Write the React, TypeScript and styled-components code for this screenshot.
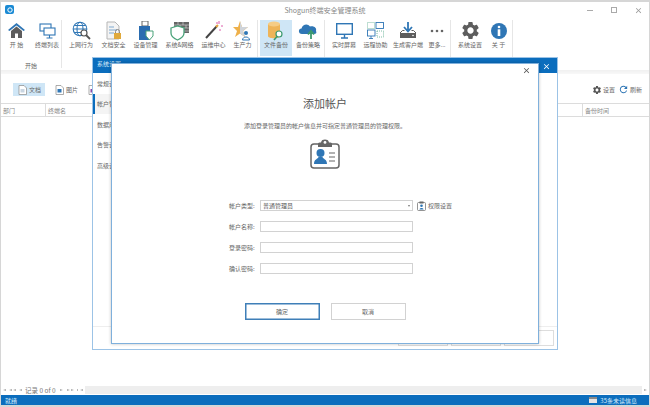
import React from 'react';
import styled, { createGlobalStyle } from 'styled-components';
import { MdClose, MdSettings, MdRefresh } from 'react-icons/md';

const GlobalStyle = createGlobalStyle`
  html, body { margin: 0; padding: 0; background: #fff; overflow: hidden; }
  * { box-sizing: border-box; }
`;

const Shell = styled.div`
  position: relative;
  width: 650px;
  height: 407px;
  display: flex;
  flex-direction: column;
  background: #fff;
  border-top: 2px solid #d6d6d6;
  border-left: 1px solid #d6d6d6;
  border-right: 1px solid #d6d6d6;
  border-bottom: 2px solid #d6d6d6;
  font-family: "Noto Sans CJK SC", "Liberation Sans", sans-serif;
  font-size: 6px;
  color: #666;
  overflow: hidden;
`;

const TitleBar = styled.div`
  height: 16px;
  display: flex;
  align-items: center;
  justify-content: center;
  position: relative;
  color: #888;
  font-size: 7px;
`;

const Logo = styled.div`
  position: absolute;
  left: 4px;
  top: 3px;
  width: 9px;
  height: 9px;
  border-radius: 2px;
  background: #1a8ad4;
  display: flex;
  align-items: center;
  justify-content: center;
`;

const WindowControls = styled.div`
  position: absolute;
  right: 4px;
  top: 1px;
  display: flex;
  gap: 10px;
  color: #aaa;
`;

const ControlBox = styled.div`
  width: 14px;
  height: 14px;
  display: flex;
  align-items: center;
  justify-content: center;
`;

const Ribbon = styled.div`
  height: 52px;
  display: flex;
  padding-top: 2px;
`;

const RibbonGroup = styled.div<{ $w: number }>`
  width: ${p => p.$w}px;
  display: flex;
  flex-direction: column;
  border-right: 1px solid #e6e6e6;
  height: 48px;
`;

const GroupItems = styled.div<{ $pad?: number }>`
  display: flex;
  height: 36px;
  padding-left: ${p => p.$pad ?? 0}px;
`;

const GroupLabel = styled.div`
  flex: 1;
  display: flex;
  align-items: center;
  justify-content: center;
  color: #666;
  padding-top: 5px;
`;

const RibbonItem = styled.div<{ $w: number; $active?: boolean }>`
  width: ${p => p.$w}px;
  height: 36px;
  flex-shrink: 0;
  display: flex;
  flex-direction: column;
  align-items: center;
  background: ${p => (p.$active ? '#cfe6f6' : 'transparent')};
  white-space: nowrap;
`;

const ItemIcon = styled.div`
  height: 17px;
  margin-top: 2px;
  display: flex;
  align-items: center;
  justify-content: center;
`;

const ItemLabel = styled.div`
  margin-top: 1px;
  line-height: 9px;
  color: #666;
`;

const Strip = styled.div`
  height: 4px;
  background: linear-gradient(#f0f0f0, #f8f8f8);
`;

const Toolbar = styled.div`
  height: 29px;
  display: flex;
  align-items: flex-start;
  padding: 9px 7px 0 12px;
`;

const ToolButton = styled.div<{ $w: number; $active?: boolean }>`
  width: ${p => p.$w}px;
  height: 13px;
  display: flex;
  align-items: center;
  gap: 2px;
  padding-left: 5px;
  margin-right: 5px;
  background: ${p => (p.$active ? '#cfe6f6' : 'transparent')};
`;

const ToolRight = styled.div`
  margin-left: auto;
  display: flex;
  align-items: center;
  gap: 3px;
  height: 13px;
`;

const ToolAction = styled.div`
  display: flex;
  align-items: center;
  gap: 1px;
`;

const TableHead = styled.div`
  height: 14px;
  display: flex;
  align-items: center;
  border-top: 1px solid #dcdcdc;
  border-bottom: 1px solid #dcdcdc;
  color: #888;
`;

const HeadCell = styled.div<{ $w?: number }>`
  width: ${p => (p.$w ? `${p.$w}px` : 'auto')};
  flex: ${p => (p.$w ? '0 0 auto' : '1')};
  height: 100%;
  display: flex;
  align-items: center;
  padding-left: 2px;
  border-right: ${p => (p.$w ? '1px solid #dcdcdc' : 'none')};
`;

const TableBody = styled.div`
  flex: 1;
`;

const ScrollRow = styled.div`
  height: 9px;
  display: flex;
  align-items: center;
`;

const Pager = styled.div`
  width: 77px;
  display: flex;
  align-items: center;
  padding-left: 2px;
  gap: 1px;
  white-space: nowrap;
`;

const PagerArrow = styled.span<{ $dir: 'left' | 'right'; $gap?: number }>`
  width: 0;
  height: 0;
  margin-left: ${p => p.$gap ?? 0}px;
  border-top: 1.5px solid transparent;
  border-bottom: 1.5px solid transparent;
  ${p => (p.$dir === 'left' ? 'border-right: 3px solid #aaa;' : 'border-left: 3px solid #aaa;')}
`;

const PagerText = styled.span`
  font-size: 6.5px;
  color: #777;
  margin: 0 3px 0 2px;
`;

const ScrollTrack = styled.div`
  flex: 1;
  height: 8px;
  background: #eeeeee;
  display: flex;
  justify-content: space-between;
`;

const ScrollEnd = styled.div`
  width: 7px;
  height: 8px;
  background: #fff;
  display: flex;
  align-items: center;
  justify-content: center;
`;

const StatusBar = styled.div`
  height: 10px;
  margin-top: 1px;
  background: #0b6dbd;
  color: #d8ecfa;
  display: flex;
  align-items: center;
  padding: 0 12px 0 4px;
  justify-content: space-between;
  font-size: 6px;
`;

const StatusRight = styled.div`
  display: flex;
  align-items: center;
  gap: 3px;
`;

const MailIcon = styled.div`
  width: 8px;
  height: 6px;
  background: #e4e4e4;
  border-top: 2px solid #888;
`;

const SystemDialog = styled.div`
  position: absolute;
  left: 91px;
  top: 55px;
  width: 466px;
  height: 293px;
  background: #fff;
  border: 1px solid #9cc3e6;
  display: flex;
  flex-direction: column;
`;

const SystemTitle = styled.div`
  height: 15px;
  background: #0b6dbd;
  color: #d8ecfa;
  display: flex;
  align-items: flex-start;
  justify-content: space-between;
  padding: 1px 6px 0 4px;
`;

const SystemBody = styled.div`
  flex: 1;
  display: flex;
  flex-direction: column;
`;

const NavItem = styled.div<{ $active?: boolean }>`
  height: 20.5px;
  width: 40px;
  display: flex;
  align-items: center;
  padding-left: ${p => (p.$active ? '2px' : '4px')};
  border-left: ${p => (p.$active ? '2px solid #0b6dbd' : 'none')};
  background: ${p => (p.$active ? '#f4f4f4' : 'transparent')};
  color: #666;
`;

const NavList = styled.div`
  flex: 1;
  display: flex;
  flex-direction: column;
`;

const SystemFooter = styled.div`
  height: 23px;
  border-top: 1px solid #eee;
  display: flex;
  justify-content: flex-end;
  gap: 3px;
  padding: 3px 3px 0 0;
`;

const FooterButton = styled.div`
  width: 50px;
  height: 16px;
  border: 1px solid #ddd;
`;

const Modal = styled.div`
  position: absolute;
  left: 110px;
  top: 61px;
  width: 428px;
  height: 281px;
  background: #fff;
  border: 1px solid #7fb0dc;
  box-shadow: 0 0 3px rgba(0, 0, 0, 0.25);
  display: flex;
  flex-direction: column;
  align-items: center;
  padding-top: 31px;
`;

const ModalClose = styled.div`
  position: absolute;
  top: 2px;
  right: 7px;
  color: #555;
  display: flex;
`;

const ModalTitle = styled.div`
  font-size: 11px;
  line-height: 16px;
  color: #555;
`;

const ModalDesc = styled.div`
  margin-top: 10px;
  line-height: 9px;
  color: #666;
`;

const BigIcon = styled.div`
  margin-top: 9px;
  height: 32px;
  display: flex;
`;

const Form = styled.div`
  margin-top: 29px;
  width: 100%;
  display: flex;
  flex-direction: column;
  gap: 10px;
  padding-left: 117px;
`;

const FormRow = styled.div`
  display: flex;
  align-items: center;
  height: 11px;
`;

const FormLabel = styled.div`
  width: 31px;
  color: #666;
  white-space: nowrap;
`;

const Field = styled.div`
  width: 153px;
  height: 11px;
  border: 1px solid #d2d2d2;
  display: flex;
  align-items: center;
  justify-content: space-between;
  padding: 0 2px;
  color: #555;
`;

const Caret = styled.span`
  width: 0;
  height: 0;
  border-left: 1.5px solid transparent;
  border-right: 1.5px solid transparent;
  border-top: 2px solid #777;
`;

const RightsLink = styled.div`
  display: flex;
  align-items: center;
  gap: 2px;
  margin-left: 4px;
  white-space: nowrap;
`;

const ButtonRow = styled.div`
  margin-top: 29px;
  display: flex;
  gap: 11px;
`;

const DialogButton = styled.div<{ $primary?: boolean }>`
  width: 75px;
  height: 17px;
  display: flex;
  align-items: center;
  justify-content: center;
  border: ${p => (p.$primary ? '1px solid #3f7fb8' : '1px solid #d2d2d2')};
  box-shadow: ${p => (p.$primary ? 'inset 0 0 0 0.5px #3f7fb8' : 'none')};
  color: #666;
`;

const HomeIcon = () => (
  <svg width="17" height="15" viewBox="0 0 17 15">
    <path d="M8.5 0 L17 7 L15.5 8 L8.5 2.5 L1.5 8 L0 7 Z" fill="#2f76b5" />
    <path d="M3 8 L8.5 3.5 L14 8 V15 H10 V10.5 H7 V15 H3 Z" fill="#5d5d5d" />
  </svg>
);
const TerminalsIcon = () => (
  <svg width="17" height="16" viewBox="0 0 17 16" fill="none" stroke="#2f76b5" strokeWidth="1.1">
    <rect x="1" y="1" width="11" height="7" />
    <rect x="5" y="5" width="11" height="7" fill="#fff" />
    <path d="M10.5 12 V15 M7.5 15 H13.5" />
  </svg>
);
const GlobeIcon = () => (
  <svg width="19" height="19" viewBox="0 0 19 19" fill="none">
    <g stroke="#2f76b5" strokeWidth="1.1">
      <circle cx="8" cy="8" r="6.8" />
      <ellipse cx="8" cy="8" rx="3" ry="6.8" />
      <path d="M1.2 8 H14.8 M2.5 4.5 H13.5 M2.5 11.5 H13.5" />
    </g>
    <circle cx="12" cy="12" r="3" fill="#fff" stroke="#555" strokeWidth="1.2" />
    <path d="M14 14 L18 18" stroke="#555" strokeWidth="1.8" />
  </svg>
);
const DocLockIcon = () => (
  <svg width="16" height="20" viewBox="0 0 16 20">
    <path d="M1 1 H9 L13 5 V18 H1 Z" fill="#f4f4f4" stroke="#b5b5b5" />
    <path d="M3 6 H8 M3 9 H11 M3 12 H8" stroke="#7fa9cf" />
    <rect x="8" y="12" width="7" height="6" fill="#e0a93c" />
    <path d="M9.5 12 V10.5 a2 2 0 0 1 4 0 V12" fill="none" stroke="#888" />
  </svg>
);
const UsbIcon = () => (
  <svg width="16" height="20" viewBox="0 0 16 20">
    <rect x="4" y="0" width="6" height="5" fill="#fff" stroke="#666" />
    <rect x="1" y="5" width="11" height="14" fill="#2a6cb0" />
    <path d="M8 10 L15 10 V15 L11.5 19 L8 15 Z" fill="#fff" stroke="#4aa37a" />
  </svg>
);
const FirewallIcon = () => (
  <svg width="20" height="20" viewBox="0 0 20 20">
    <rect x="4" y="1" width="15" height="11" fill="#666" />
    <path d="M4 4 H19 M4 7 H19 M4 10 H19 M8 1 V4 M13 1 V4 M10 4 V7 M16 4 V7 M8 7 V10 M13 7 V10" stroke="#ddd" strokeWidth="0.6" />
    <path d="M1 7 L7.5 5 L14 7 V12 C14 16 10 18 7.5 19 C5 18 1 16 1 12 Z" fill="#fff" stroke="#4aa37a" strokeWidth="1.3" />
  </svg>
);
const WandIcon = () => (
  <svg width="18" height="19" viewBox="0 0 18 19">
    <path d="M1 17 L12 5" stroke="#444" strokeWidth="2" />
    <path d="M11 6 L13 4" stroke="#e8a33c" strokeWidth="2" />
    <path d="M14 0 V3 M11 2 H13 M16 5 H18 M15 8 V10" stroke="#d84aa0" strokeWidth="0.9" />
  </svg>
);
const StarIcon = () => (
  <svg width="19" height="20" viewBox="0 0 19 20">
    <path d="M7 0 L9 6 H15 L10 10 L12 16 L7 12.5 L2 16 L4 10 L0 6 H5 Z" fill="#eeb04a" />
    <path d="M7 0 L9 6 H15 L10 10 L12 16 L7 12.5 Z" fill="#cfd4da" />
    <circle cx="13" cy="12" r="2" fill="#2f76b5" />
    <path d="M9.5 19 C9.5 15 16.5 15 16.5 19 Z" fill="#fff" stroke="#2f76b5" />
  </svg>
);
const BackupIcon = () => (
  <svg width="18" height="20" viewBox="0 0 18 20">
    <path d="M1 3 V15 C1 18 13 18 13 15 V3 Z" fill="#eeb458" />
    <ellipse cx="7" cy="3" rx="6" ry="2.4" fill="#f5cc85" />
    <circle cx="12" cy="13" r="3" fill="#fff" stroke="#3c9a6e" strokeWidth="1.2" />
    <path d="M10 15.5 L7 19" stroke="#3c9a6e" strokeWidth="1.6" />
  </svg>
);
const CloudIcon = () => (
  <svg width="20" height="17" viewBox="0 0 20 17">
    <path d="M4 12 C0 12 0 6.5 3.5 6.5 C4.5 2 10 1 12 4.5 C16 3.5 19 6 18 9 C19 11 18 12 16 12 Z" fill="#2f76b5" />
    <path d="M13 17 V10 M10 12.5 L13 9 L16 12.5" fill="none" stroke="#3c9a6e" strokeWidth="1.8" />
  </svg>
);
const MonitorIcon = () => (
  <svg width="17" height="16" viewBox="0 0 17 16" fill="none">
    <rect x="0.7" y="0.7" width="15.6" height="10.6" stroke="#2f76b5" strokeWidth="1.4" />
    <path d="M8.5 11 V15 M5 15 H12" stroke="#2f76b5" strokeWidth="1.4" />
  </svg>
);
const RemoteIcon = () => (
  <svg width="17" height="17" viewBox="0 0 17 17" fill="none" strokeWidth="0.9">
    <rect x="0.5" y="0.5" width="7" height="6" stroke="#6db59a" strokeDasharray="1 1" />
    <rect x="9" y="0.5" width="7.5" height="6" stroke="#2f76b5" />
    <rect x="0.5" y="8" width="7.5" height="6" stroke="#2f76b5" />
    <rect x="10" y="9" width="6.5" height="6" stroke="#6db59a" strokeDasharray="1 1" />
    <path d="M4 14 V16 M2 16.5 H6" stroke="#2f76b5" />
  </svg>
);
const InstallerIcon = () => (
  <svg width="18" height="17" viewBox="0 0 18 17">
    <path d="M9 0 V8 M5 5 L9 9.5 L13 5" fill="none" stroke="#2f76b5" strokeWidth="1.8" />
    <rect x="1" y="11" width="16" height="5" fill="#5d5d5d" />
    <path d="M1 11 L3.5 8.5 H5.5 M17 11 L14.5 8.5 H12.5" fill="none" stroke="#5d5d5d" />
    <circle cx="14" cy="13.5" r="0.8" fill="#fff" />
  </svg>
);
const DotsIcon = () => (
  <svg width="14" height="4" viewBox="0 0 14 4" fill="#666">
    <circle cx="2" cy="2" r="1.3" />
    <circle cx="7" cy="2" r="1.3" />
    <circle cx="12" cy="2" r="1.3" />
  </svg>
);
const InfoIcon = () => (
  <svg width="16" height="16" viewBox="0 0 16 16">
    <circle cx="8" cy="8" r="8" fill="#2f76b5" />
    <circle cx="8" cy="4" r="1.3" fill="#fff" />
    <rect x="6.7" y="6.3" width="2.6" height="6.7" fill="#fff" />
  </svg>
);
const DocTool = ({ tint }: { tint: string }) => (
  <svg width="9" height="10" viewBox="0 0 9 10">
    <path d="M1 0.5 H6 L8.5 3 V9.5 H1 Z" fill="#fff" stroke="#888" strokeWidth="0.7" />
    <rect x="2.5" y="4" width="4" height="3.5" fill={tint} />
  </svg>
);
const BadgeIcon = () => (
  <svg width="30" height="30" viewBox="0 0 30 30">
    <rect x="1" y="5" width="28" height="24" rx="3" fill="#fff" stroke="#666" strokeWidth="1.5" />
    <path d="M8 8 V5 C8 3.5 9 3.5 11 3.5 C11.5 1 13 0.4 15 0.4 C17 0.4 18.5 1 19 3.5 C21 3.5 22 3.5 22 5 V8 Z" fill="#666" />
    <circle cx="15" cy="3.4" r="1.4" fill="#fff" />
    <circle cx="10.5" cy="14" r="4" fill="#2f76b5" />
    <path d="M4 25 C4 20 8 20 8.5 18 H12.5 C13 20 17 20 17 25 Z" fill="#2f76b5" />
    <path d="M19 14 H25 M19 18 H25 M19 22 H25" stroke="#999" strokeWidth="1.3" />
  </svg>
);
const RightsIcon = () => (
  <svg width="9" height="10" viewBox="0 0 9 10">
    <rect x="0.5" y="1.5" width="8" height="8" rx="1" fill="#fff" stroke="#666" strokeWidth="0.7" />
    <rect x="2.5" y="0.5" width="4" height="2" fill="#666" />
    <circle cx="4.5" cy="4.8" r="1.3" fill="#2f76b5" />
    <path d="M2.5 8.5 C2.5 6.5 6.5 6.5 6.5 8.5 Z" fill="#2f76b5" />
  </svg>
);

const startItems = [
  { label: '开 始', w: 31, icon: <HomeIcon /> },
  { label: '终端列表', w: 30, icon: <TerminalsIcon /> },
];
const securityItems = [
  { label: '上网行为', w: 32, icon: <GlobeIcon /> },
  { label: '文档安全', w: 33, icon: <DocLockIcon /> },
  { label: '设备管理', w: 31, icon: <UsbIcon /> },
  { label: '系统&网络', w: 37, icon: <FirewallIcon /> },
  { label: '运维中心', w: 31, icon: <WandIcon /> },
  { label: '生产力', w: 27, icon: <StarIcon /> },
];
const backupItems = [
  { label: '文件备份', w: 32, icon: <BackupIcon />, active: true },
  { label: '备份策略', w: 32, icon: <CloudIcon /> },
];
const toolItems = [
  { label: '实时屏幕', w: 32, icon: <MonitorIcon /> },
  { label: '远程协助', w: 31, icon: <RemoteIcon /> },
  { label: '生成客户端', w: 34, icon: <InstallerIcon /> },
  { label: '更多...', w: 24, icon: <DotsIcon /> },
];
const systemItems = [
  { label: '系统设置', w: 32, icon: <MdSettings size={21} color="#5d5d5d" /> },
  { label: '关 于', w: 25, icon: <InfoIcon /> },
];

type Item = { label: string; w: number; icon: React.ReactNode; active?: boolean };

const Items = ({ items, pad }: { items: Item[]; pad?: number }) => (
  <GroupItems $pad={pad}>
    {items.map(it => (
      <RibbonItem key={it.label} $w={it.w} $active={it.active}>
        <ItemIcon>{it.icon}</ItemIcon>
        <ItemLabel>{it.label}</ItemLabel>
      </RibbonItem>
    ))}
  </GroupItems>
);

const navItems = ['常规设置', '帐户管理', '数据库', '告警设置', '高级设置'];

export default function App() {
  return (
    <Shell>
      <GlobalStyle />
      <TitleBar>
        <Logo>
          <svg width="6" height="6" viewBox="0 0 6 6">
            <circle cx="3" cy="3" r="2.2" fill="none" stroke="#fff" strokeWidth="1" />
          </svg>
        </Logo>
        Shogun终端安全管理系统
        <WindowControls>
          <ControlBox>
            <svg width="8" height="8" viewBox="0 0 8 8"><path d="M1 4.5 H7" stroke="#aaa" /></svg>
          </ControlBox>
          <ControlBox>
            <svg width="8" height="8" viewBox="0 0 8 8"><rect x="1.5" y="1.5" width="5" height="5" fill="none" stroke="#aaa" /></svg>
          </ControlBox>
          <ControlBox>
            <MdClose size={9} color="#999" />
          </ControlBox>
        </WindowControls>
      </TitleBar>

      <Ribbon>
        <RibbonGroup $w={61}>
          <Items items={startItems} />
          <GroupLabel>开始</GroupLabel>
        </RibbonGroup>
        <RibbonGroup $w={196}>
          <Items items={securityItems} pad={3} />
        </RibbonGroup>
        <RibbonGroup $w={67}>
          <Items items={backupItems} pad={2} />
        </RibbonGroup>
        <RibbonGroup $w={126}>
          <Items items={toolItems} pad={3} />
        </RibbonGroup>
        <RibbonGroup $w={62}>
          <Items items={systemItems} pad={3} />
        </RibbonGroup>
      </Ribbon>
      <Strip />

      <Toolbar>
        <ToolButton $w={32} $active>
          <DocTool tint="#c9d6e2" />
          文档
        </ToolButton>
        <ToolButton $w={28}>
          <DocTool tint="#2f76b5" />
          图片
        </ToolButton>
        <ToolButton $w={20}>
          <DocTool tint="#8a4aa8" />
        </ToolButton>
        <ToolRight>
          <ToolAction>
            <MdSettings size={10} color="#555" />
            设置
          </ToolAction>
          <ToolAction>
            <MdRefresh size={11} color="#2f76b5" />
            刷新
          </ToolAction>
        </ToolRight>
      </Toolbar>

      <TableHead>
        <HeadCell $w={45}>部门</HeadCell>
        <HeadCell $w={537}>终端名</HeadCell>
        <HeadCell>备份时间</HeadCell>
      </TableHead>
      <TableBody />

      <ScrollRow>
        <Pager>
          <PagerArrow $dir="left" />
          <PagerArrow $dir="left" $gap={2} />
          <PagerArrow $dir="left" />
          <PagerArrow $dir="left" $gap={2} />
          <PagerText>记录 0 of 0</PagerText>
          <PagerArrow $dir="right" />
          <PagerArrow $dir="right" $gap={3} />
          <PagerArrow $dir="right" />
          <PagerArrow $dir="right" $gap={2} />
        </Pager>
        <ScrollTrack>
          <ScrollEnd><PagerArrow $dir="left" /></ScrollEnd>
          <ScrollEnd><PagerArrow $dir="right" /></ScrollEnd>
        </ScrollTrack>
      </ScrollRow>
      <StatusBar>
        <span>就绪</span>
        <StatusRight>
          <MailIcon />
          35条未读信息
        </StatusRight>
      </StatusBar>

      <SystemDialog>
        <SystemTitle>
          系统设置
          <MdClose size={9} color="#fff" style={{ marginTop: 3 }} />
        </SystemTitle>
        <SystemBody>
          <NavList>
            {navItems.map((n, i) => (
              <NavItem key={n} $active={i === 1}>{n}</NavItem>
            ))}
          </NavList>
          <SystemFooter>
            <FooterButton />
            <FooterButton />
            <FooterButton />
          </SystemFooter>
        </SystemBody>
      </SystemDialog>

      <Modal>
        <ModalClose>
          <MdClose size={9} />
        </ModalClose>
        <ModalTitle>添加帐户</ModalTitle>
        <ModalDesc>添加登录管理员的帐户信息并可指定普通管理员的管理权限。</ModalDesc>
        <BigIcon>
          <BadgeIcon />
        </BigIcon>
        <Form>
          <FormRow>
            <FormLabel>帐户类型:</FormLabel>
            <Field>
              普通管理员
              <Caret />
            </Field>
            <RightsLink>
              <RightsIcon />
              权限设置
            </RightsLink>
          </FormRow>
          <FormRow>
            <FormLabel>帐户名称:</FormLabel>
            <Field />
          </FormRow>
          <FormRow>
            <FormLabel>登录密码:</FormLabel>
            <Field />
          </FormRow>
          <FormRow>
            <FormLabel>确认密码:</FormLabel>
            <Field />
          </FormRow>
        </Form>
        <ButtonRow>
          <DialogButton $primary>确定</DialogButton>
          <DialogButton>取消</DialogButton>
        </ButtonRow>
      </Modal>
    </Shell>
  );
}
